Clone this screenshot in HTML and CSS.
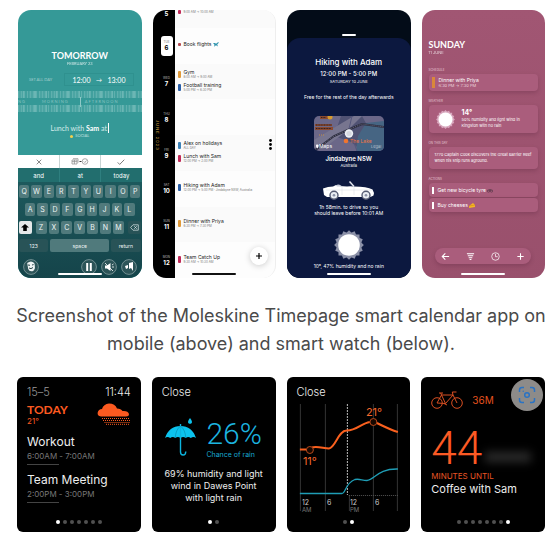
FILE: index.html
```html
<!DOCTYPE html>
<html lang="en">
<head>
<meta charset="utf-8">
<title>Moleskine Timepage</title>
<link rel="stylesheet" href="styles.css">
</head>
<body>
<figure class="figure">
<div class="cards phones">

<section class="phone compose">
  <h2 class="display center">TOMORROW</h2>
  <p class="tiny center soft">FEBRUARY 23</p>
  <div class="when">
    <button class="all-day">SET ALL DAY</button>
    <div class="times"><span>12:00</span><span class="arrow">→</span><span>13:00</span></div>
  </div>
  <div class="timeline">
    <div class="ticks"></div>
    <div class="periods"><span>NG</span><span>MORNING</span><span>AFTERNOON</span></div>
    <div class="ticks"></div>
  </div>
  <p class="entry">Lunch with <b>Sam</b> at<span class="caret"></span></p>
  <p class="tag"><i class="dot-yellow"></i>SOCIAL</p>
  <div class="keyboard">
    <div class="thirds actions">
      <button aria-label="Cancel"><svg width="6" height="6" viewBox="0 0 6 6"><path d="M.7.7l4.6 4.6M5.3.7L.7 5.3" stroke="#555" stroke-width=".7"/></svg></button>
      <button aria-label="Convert to task"><svg width="18" height="7" viewBox="0 0 18 7" fill="none" stroke="#888" stroke-width=".7"><path d="M1 2h5v4H1zM2 .7h5v4M1 3.6h5M3.4 2v4"/><path d="M8.5 3.5h2" stroke="#333" stroke-width="1"/><circle cx="14" cy="3.5" r="2.8"/><path d="M12.8 3.5l1 1 1.7-2"/></svg></button>
      <button aria-label="Done"><svg width="8" height="6" viewBox="0 0 8 6"><path d="M.7 3.4l2 2L7.3.7" fill="none" stroke="#444" stroke-width=".7"/></svg></button>
    </div>
    <div class="thirds hints"><button>and</button><button>at</button><button>today</button></div>
    <div class="keys">
      <div class="key-row"><button>Q</button><button>W</button><button>E</button><button>R</button><button>T</button><button>Y</button><button>U</button><button>I</button><button>O</button><button>P</button></div>
      <div class="key-row inset"><button>A</button><button>S</button><button>D</button><button>F</button><button>G</button><button>H</button><button>J</button><button>K</button><button>L</button></div>
      <div class="key-row letters">
        <button class="shift" aria-label="Shift"><svg width="8" height="7" viewBox="0 0 8 7"><path d="M4 0l4 3.6H5.8V7H2.2V3.6H0z" fill="#000"/></svg></button>
        <div class="key-row"><button>Z</button><button>X</button><button>C</button><button>V</button><button>B</button><button>N</button><button>M</button></div>
        <button class="dark" aria-label="Delete"><svg width="9" height="7" viewBox="0 0 9 7" fill="none" stroke="#dfeaea" stroke-width=".7"><path d="M3 .8h5.3v5.4H3L.6 3.5zM4.2 2.2l2.6 2.6M6.8 2.2L4.2 4.8"/></svg></button>
      </div>
      <div class="key-row bottom"><button class="dark">123</button><button class="space">space</button><button class="dark">return</button></div>
    </div>
    <div class="stickers">
      <button class="round first" aria-label="Sticker"><svg viewBox="0 0 16 16"><circle cx="8" cy="8" r="7.4" fill="#2c5458" stroke="#93aaac" stroke-width=".7"/><path d="M4.200 4q4-3 7 0q2 5-1 8q-4 1-5-2z" fill="#eef3f3"/><path d="M5 6l2 .3M9 6l1.600-.4M6 9q2 1.500 4-.5" stroke="#29464a" fill="none"/></svg></button>
      <button class="round" aria-label="Pause"><svg viewBox="0 0 16 16"><circle cx="8" cy="8" r="7.400" fill="#2c5458" stroke="#93aaac" stroke-width=".7"/><path d="M5.200 4h2v8h-2zM8.800 4h2v8h-2z" fill="#fff"/></svg></button>
      <button class="round" aria-label="Mute"><svg viewBox="0 0 16 16"><circle cx="8" cy="8" r="7.400" fill="#2c5458" stroke="#93aaac" stroke-width=".7"/><path d="M4 6.500h2L9.500 4v8L6 9.500H4z" fill="#fff"/><path d="M4 4l8 8M11 6l1.500-1M11 8h2" stroke="#fff" stroke-width=".8"/></svg></button>
      <button class="round" aria-label="Expand"><svg viewBox="0 0 16 16"><circle cx="8" cy="8" r="7.400" fill="#2c5458" stroke="#93aaac" stroke-width=".7"/><path d="M8 4l4-1v9l-2-3-2 1zM4 7l3-1v3L5 10z" fill="#fff"/></svg></button>
    </div>
  </div>
  <span class="home light"></span>
</section>

<section class="phone agenda">
  <span class="month">JUNE 2023</span>
  <div class="day short"><div class="date"><b>5</b></div><div class="events"><div class="event"><i class="bar crimson"></i><p><small>9:00 AM → 10:00 AM</small></p></div></div></div>
  <div class="day"><div class="date"><span class="pill"><small>TUE</small><b>6</b></span></div><div class="events"><div class="event"><i class="bar square"></i><p>Book flights <svg width="6" height="5" viewBox="0 0 6 5"><path d="M0 1h2l1 .8L5 .3l1 .2-1.800 2L5 4.500 3 3.200 1 4.800l.5-2z" fill="#2d93ad"/></svg></p></div></div></div>
  <div class="day"><div class="date"><small>WED</small><b>7</b></div><div class="events"><div class="event"><i class="bar orange"></i><p>Gym<small>8:00 AM → 9:00 AM</small></p></div><div class="event"><i class="bar blue"></i><p>Football training<small>5:00 PM → 6:30 PM</small></p></div></div></div>
  <div class="day"><div class="date"><small>THU</small><b>8</b></div><div class="events"></div></div>
  <div class="day"><div class="date"><small>FRI</small><b>9</b></div><div class="events"><div class="event"><i class="bar sky"></i><p>Alex on holidays<small>ALL DAY</small></p></div><div class="event"><i class="bar crimson"></i><p>Lunch with Sam<small>12:00 PM → 2:00 PM</small></p></div></div></div>
  <div class="day"><div class="date"><small>SAT</small><b>10</b></div><div class="events"><div class="event"><i class="bar blue"></i><p>Hiking with Adam<small>12:00 PM → 5:00 PM · Jindabyne NSW, Australia</small></p></div></div></div>
  <div class="day"><div class="date"><small>SUN</small><b>11</b></div><div class="events"><div class="event"><i class="bar orange"></i><p>Dinner with Priya<small>6:30 PM → 7:30 PM</small></p></div></div></div>
  <div class="day"><div class="date"><small>MON</small><b>12</b></div><div class="events"><div class="event"><i class="bar crimson"></i><p>Team Catch Up<small>9:30 AM → 10:30 AM</small></p></div></div></div>
  <button class="more" aria-label="More"><svg width="3" height="11" viewBox="0 0 3 11"><circle cx="1.500" cy="1.500" r="1.400"/><circle cx="1.500" cy="5.500" r="1.400"/><circle cx="1.500" cy="9.500" r="1.400"/></svg></button>
  <button class="fab" aria-label="Add event"><svg width="6" height="6" viewBox="0 0 6 6"><path d="M3 0v6M0 3h6" stroke="#000" stroke-width="1.200"/></svg></button>
  <span class="home"></span>
</section>

<section class="phone detail">
  <span class="grip"></span>
  <div class="sheet">
    <h2>Hiking with Adam</h2>
    <p class="hours">12:00 PM - 5:00 PM</p>
    <p class="tiny">SATURDAY 10 JUNE</p>
    <p class="note free">Free for the rest of the day afterwards</p>
    <svg class="map" viewBox="0 0 70 35" role="img" aria-label="Map">
      <path fill="#6b6788" d="M0 0h70v35H0z"/><path fill="#505273" d="M27 0h21l5 9 9-3 8 8v21H48L37 26 20 20z"/><path fill="#466583" d="M44 20l8-13 18-2v30H42z"/><path fill="#77758f" d="M28 7l12-7h8L34 14 9 33H0V24z"/>
      <path d="M0 35l20-15 16-7 12-5 22 3" stroke="#292a3d" stroke-width="2" fill="none"/><path d="M0 35l20-15 16-7 12-5 22 3" stroke="#9795a6" stroke-width=".6" stroke-dasharray="1 1" fill="none"/><path d="M38 0l-3 13 8 22" stroke="#55577c" fill="none"/>
      <path fill="#8a4930" d="M1 8h17v2H1zM1 11h18v3H1zM6 0h8v3H6z"/><path d="M2 9h16M2 12.500h15M7 1.500h5" stroke="#2d2023" stroke-dasharray="1 .6"/><circle cx="16" cy="1" r="2.500" fill="#d59a2c"/><path d="M5 19h5" stroke="#c48e46" stroke-dasharray="1 1"/>
      <circle cx="32" cy="25" r="2.300" fill="#f0752f"/><text x="36" y="27" font-size="5" fill="#ef7544">The Lake</text>
      <circle cx="35" cy="17.500" r="4.200" fill="#eef0f5"/><circle cx="35" cy="17.500" r="2.600" fill="#d7d9e1"/>
      <text x="5" y="32" font-size="5" fill="#fff">Maps</text><path fill="#fff" d="M2 29.500q0-1.500 1.500-1 1.500 0 1 2t-1.500 1.500T2 29.500z"/><text x="57" y="32" font-size="4" fill="#b9c1d0">Legal</text>
    </svg>
    <h3>Jindabyne NSW</h3>
    <p class="tiny aus">Australia</p>
    <svg class="car" viewBox="0 0 52 19" role="img" aria-label="Car"><path fill="#fff" d="M0 7.500Q5 5.500 10 5.500l3-1.500 3 1 8 .5 3.500-.3 3.500.3q13 .2 18.500 3L51 12l-.5 2.500-3 1.500H4L1 14z"/><path fill="#c9cedb" d="M13 4.500q2-2 5 0l1 1h-5z"/><path d="M26.500.5l4.500 5" stroke="#e9ecf3" stroke-width="1.500"/><path d="M29 4.500l-3-3.500" stroke="#7e86a0" stroke-width=".5"/><path d="M3 9h46M31 6v8M19 6v8" stroke="#d4d8e2" stroke-width=".5"/><g fill="#e9edf2" stroke="#555b72" stroke-width="1.400"><circle cx="11" cy="14.300" r="4"/><circle cx="43" cy="14.300" r="4"/></g><g fill="#8a91a5"><circle cx="11" cy="14.300" r="1.300"/><circle cx="43" cy="14.300" r="1.300"/></g></svg>
    <p class="note">1h 58min. to drive so you<br>should leave before 10:01 AM</p>
    <svg class="sun" viewBox="0 0 30 30" role="img" aria-label="Sunny"><g fill="#8b90a7"><path d="M4.500 4.500h21v21h-21z"/><path d="M4.500 4.500h21v21h-21z" transform="rotate(22.500 15 15)"/><path d="M4.500 4.500h21v21h-21z" transform="rotate(45 15 15)"/><path d="M4.500 4.500h21v21h-21z" transform="rotate(67.500 15 15)"/></g><circle cx="15" cy="15" r="10.800" fill="#fff"/></svg>
    <p class="note">10°, 47% humidity and no rain</p>
  </div>
  <span class="home light"></span>
</section>

<section class="phone today">
  <h2 class="display">SUNDAY</h2>
  <p class="tiny soft">11 JUNE</p>
  <h3>SCHEDULE</h3>
  <div class="tile"><i class="mark orange"></i><p>Dinner with Priya<small>6:30 PM → 7:30 PM</small></p></div>
  <h3>WEATHER</h3>
  <div class="tile weather"><svg class="mini-sun" viewBox="0 0 30 30" role="img" aria-label="Sunny"><g fill="#d9a9bf"><path d="M4.500 4.500h21v21h-21z"/><path d="M4.500 4.500h21v21h-21z" transform="rotate(22.500 15 15)"/><path d="M4.500 4.500h21v21h-21z" transform="rotate(45 15 15)"/><path d="M4.500 4.500h21v21h-21z" transform="rotate(67.500 15 15)"/></g><circle cx="15" cy="15" r="11" fill="#fff"/></svg><p><b>14°</b><br>50% humidity and light wind in<br>Kingston with no rain</p></div>
  <h3>ON THIS DAY</h3>
  <div class="tile history"><p>1770 Captain Cook discovers the Great Barrier Reef when his ship runs aground.</p></div>
  <h3>ACTIONS</h3>
  <div class="tile action"><i class="mark"></i><p>Get new bicycle tyre <svg width="6" height="5" viewBox="0 0 6 5" fill="none" stroke="#5c3b4c" stroke-width=".7"><circle cx="1.500" cy="3" r="1.200"/><circle cx="4.500" cy="3" r="1.200"/><path d="M1.500 3L3 1l1.500 2"/></svg></p></div>
  <div class="tile action"><i class="mark"></i><p>Buy cheeses <svg width="6" height="5" viewBox="0 0 6 5"><path d="M0 3L4 0l2 2v2L0 5z" fill="#f5b822"/><path d="M0 3l6-1" stroke="#c87d18" stroke-width=".5"/></svg></p></div>
  <nav class="dock">
    <button aria-label="Back"><svg viewBox="0 0 10 10"><path d="M9 5H1.500M4.800 1.600L1.400 5l3.400 3.400"/></svg></button>
    <button aria-label="Filter"><svg viewBox="0 0 10 10"><path d="M1 2h8M2 4.200h6M3 6.400h4M4 8.400h2"/></svg></button>
    <button aria-label="History"><svg viewBox="0 0 10 10"><circle cx="5" cy="5" r="4.200" stroke-width=".8"/><path d="M5 2v3.200h2.400" stroke-width=".8"/></svg></button>
    <button aria-label="Add"><svg viewBox="0 0 10 10"><path d="M5 1.500v7M1.500 5h7"/></svg></button>
  </nav>
  <span class="home light"></span>
</section>
</div>

<figcaption>Screenshot of the Moleskine Timepage smart calendar app on mobile (above) and smart watch (below).</figcaption>

<div class="cards watches">
<section class="watch">
  <div class="split clock"><span class="grey">15–5</span><span>11:44</span></div>
  <div class="split summary"><div><h2>TODAY</h2><p>21°</p></div>
  <svg width="34" height="22" viewBox="0 0 34 22" role="img" aria-label="Rain"><path fill="#fc5a20" d="M4 13.500Q0 13 .7 9.500 1.500 6 5 6 6.500 1 12 .5q6 0 8 5 4 0 5.500 2.500Q31 7.500 32 11q0 2.500-3 2.500z"/><path d="M5 15.500h27M6 17.500h27M7.500 19.500h26M9 21.300h23" stroke="#fc5a20" stroke-width="1" stroke-dasharray="1 1"/></svg></div>
  <div class="appt"><h3>Workout</h3><p>6:00AM - 7:00AM</p></div>
  <div class="appt"><h3>Team Meeting</h3><p>2:00PM - 3:00PM</p></div>
  <div class="dots"><i class="on"></i><i></i><i></i><i></i><i></i><i></i><i></i></div>
</section>

<section class="watch">
  <button class="close">Close</button>
  <div class="rain">
    <svg width="31" height="38" viewBox="0 0 31 38" role="img" aria-label="Umbrella"><path fill="#0cc3ee" d="M0 20Q4 8 15.500 8T31 20q-2.500-2-5.200 0-2.500-2-5.100 0-2.600-2-5.200 0-2.600-2-5.200 0-2.600-2-5.100 0Q2.500 18 0 20zM25 0q3 4 1.500 5.200-1.500 1-3 0Q22 4 25 0z"/><path d="M15.500 6v28q0 3 2.600 3t2.700-3.500" stroke="#0cb5df" stroke-width="1.400" fill="none"/><path d="M15.500 8q-5 4-5.200 12M15.500 8q5 4 5.200 12" stroke="#067c9b" stroke-width=".5" fill="none"/></svg>
    <div><strong>26%</strong><span>Chance of rain</span></div>
  </div>
  <p class="forecast">69% humidity and light<br>wind in Dawes Point<br>with light rain</p>
  <div class="dots"><i class="on"></i><i></i></div>
</section>

<section class="watch">
  <button class="close">Close</button>
  <svg class="chart" viewBox="0 0 100 110" role="img" aria-label="Temperature and rain by hour">
    <path d="M1.500 1v107M26.500 1v107M74.500 1v107M98.500 1v107" stroke="#343434"/>
    <path d="M50.500 92v16" stroke="#343434"/>
    <path d="M48.500 1v91" stroke="#bbb" stroke-dasharray="2 1"/>
    <path d="M50 92.500h49" stroke="#555" stroke-dasharray="1 1"/>
    <path d="M1 90.500h42c4 0 3-10 13-14 5-1 7 1 12 1 8-1 11-12 31-11.500" fill="none" stroke="#1f9db5" stroke-width="1.300"/>
    <path d="M1 46.500h6.500M13 44.500c5-2 12 1 17 1 7-1 9-18 18-18 10 0 14-7 23-8.500M78 20c6 3 14 7 21 9" fill="none" stroke="#f9601e" stroke-width="2"/>
    <g fill="#160700" stroke="#b9491b"><circle cx="11" cy="47" r="3.500"/><circle cx="74.500" cy="19" r="3.500"/></g>
    <g fill="#f4672c" font-size="11"><text x="4" y="62">11°</text><text x="67" y="13">21°</text></g>
    <g fill="#ccc" font-size="7"><text x="3" y="102">12</text><text x="28" y="102">6</text><text x="51" y="102">12</text><text x="76" y="102">6</text></g>
    <g fill="#777" font-size="6"><text x="3" y="109">AM</text><text x="51" y="109">PM</text></g>
  </svg>
  <div class="dots"><i></i><i class="on"></i></div>
</section>

<section class="watch until">
  <span class="smudge"></span>
  <div class="ride"><svg width="32" height="18" viewBox="0 0 32 18" fill="none" stroke="#d94f22" stroke-width="1" role="img" aria-label="Bicycle"><circle cx="6" cy="12" r="5.300"/><circle cx="26" cy="12" r="5.300"/><path d="M6 12L10.500 4H22l-7.500 8.500L10.500 4M6 12l8.500.5M22 4l4 8M22 4l-.7-3h4.200M10.500 4L9.700 2M8 2h4M13 12.500l3 1.500"/></svg><span>36M</span></div>
  <strong class="count">44</strong>
  <p class="label">MINUTES UNTIL</p>
  <h3>Coffee with Sam</h3>
  <div class="dots"><i></i><i></i><i></i><i></i><i></i><i></i><i></i><i class="on"></i></div>
  <button class="lens" aria-label="Search image"><svg width="18" height="18" viewBox="0 0 18 18" fill="none" stroke="#2a73c4" stroke-width="1.500"><path d="M1.500 6V4q0-2.500 2.500-2.500h2M12 1.500h2q2.500 0 2.500 2.500v2M16.500 12v2q0 2.500-2.500 2.500h-2M6 16.500H4Q1.500 16.500 1.500 14v-2"/><circle cx="9" cy="9" r="2.300"/><circle cx="5.200" cy="5.200" r=".7" fill="#2a73c4" stroke="none"/></svg></button>
</section>
</div>
</figure>
</body>
</html>
```
FILE: styles.css
```css
* { box-sizing: border-box; }
body { margin: 0; background: #fff; font-family: Inter, Roboto, sans-serif; }
h2, h3, p, figure { margin: 0; font-weight: 400; }
button { border: 0; padding: 0; margin: 0; background: none; font: inherit; color: inherit; display: flex; align-items: center; justify-content: center; }
svg { display: block; }
small { display: block; }

.figure { padding: 10px 0 11px; }
.cards { display: grid; grid-template-columns: repeat(4, minmax(0, 1fr)); gap: 11px; padding: 0 13px 0 17px; }
.phones { padding-left: 18px; }
figcaption { margin: 24px 0 19px; padding: 0 8px 0 12px; font-size: 18px; line-height: 28px; color: #4a4a4a; text-align: center; }

/* Phones */
.phone { position: relative; display: flex; flex-direction: column; min-height: 268px; overflow: hidden; border-radius: 13px; color: #fff; }
.display { font: 700 9px/10px Lato, sans-serif; }
.tiny { font-size: 4px; line-height: 5px; }
.soft { opacity: .75; }
.center { text-align: center; }
.home { position: absolute; bottom: 3px; left: 50%; width: 44px; height: 2px; margin-left: -22px; border-radius: 1px; background: #111; }
.home.light { background: #fff; }

.compose { padding-top: 41px; background: #359997; font-family: Lato, sans-serif; }
.when { display: flex; align-items: center; justify-content: space-between; height: 13px; margin-top: 7px; padding: 0 8px 0 11px; }
.all-day { font-size: 4px; color: #a5d0ce; }
.times { display: flex; align-items: center; justify-content: space-between; width: 70px; height: 13px; padding: 0 7px 0 8px; border: 1px solid #2f918f; font-size: 7px; }
.arrow { font-size: 6px; }
.timeline { position: relative; margin-top: 5px; }
.ticks { height: 7px; background: repeating-linear-gradient(90deg, #5fb0ae 0 1px, transparent 1px 3px), repeating-linear-gradient(90deg, #4ca5a3 0 5px, #6bb6b4 5px 7px, #42a09e 7px 11px); }
.periods { display: flex; justify-content: space-between; height: 7px; padding-right: 23px; font-size: 4px; line-height: 7px; letter-spacing: 1px; color: #86c2c0; }
.timeline::after { content: ""; position: absolute; left: 50%; top: 6px; width: 1px; height: 10px; background: #8fc9c7; }
.entry { display: flex; justify-content: center; margin-top: 11px; font-size: 7px; line-height: 10px; white-space: pre; color: #d5ecea; }
.entry b { color: #fff; }
.caret { width: 1px; height: 10px; margin-left: 1px; background: #fff; }
.tag { display: flex; align-items: center; justify-content: center; gap: 2px; font-size: 4px; line-height: 6px; color: #c5e2e0; }
.dot-yellow { width: 3px; height: 3px; border-radius: 50%; background: #f3cf4b; }

.keyboard { margin-top: auto; background: linear-gradient(#1f5f62, #15444a); font-family: Inter, sans-serif; }
.thirds { display: grid; grid-template-columns: repeat(3, 1fr); }
.thirds button + button { border-left: 1px solid #c9d5d5; }
.actions { height: 13px; background: #fff; }
.hints { height: 14px; background: #226e6e; font-size: 6px; }
.hints button + button { border-left-color: #2e7f7f; }
.keys { display: grid; gap: 5px; padding: 3px 1px 7px; }
.key-row { display: flex; gap: 2px; }
.key-row button { flex: 1; min-width: 0; height: 13px; border-radius: 2px; background: #507a7c; font-size: 7px; color: #eef5f5; }
.key-row.inset { padding: 0 6px; }
.key-row.letters { gap: 4px; }
.key-row.letters .key-row { flex: 7; }
.key-row .shift { background: #e4e8e9; }
.key-row .dark { background: #285357; }
.key-row.bottom button { flex: 1; font-size: 5px; }
.key-row.bottom .space { flex: 2; }
.stickers { display: flex; gap: 4px; padding: 0 5px 3px; }
.round { width: 16px; height: 16px; }
.round svg { width: 16px; height: 16px; }
.round.first { margin-right: auto; }

.agenda { background: #fdfdfd; color: #222; border-right: 1px solid #eee; }
.day { flex: 1; display: grid; grid-template-columns: 22px 1fr; min-height: 35px; }
.day.short { flex: none; min-height: 18px; }
.day:nth-child(even) .events { background: #fafafa; }
.date { display: flex; flex-direction: column; align-items: center; justify-content: center; padding-left: 6px; background: #000; color: #fff; font-size: 6px; line-height: 7px; }
.short .date, .short .events { justify-content: flex-start; }
.date small { font-size: 3px; line-height: 4px; color: #bbb; }
.pill { display: flex; flex-direction: column; align-items: center; justify-content: center; width: 12px; height: 20px; border-radius: 3px; background: #fff; color: #000; }
.pill small { color: #777; }
.events { display: flex; flex-direction: column; justify-content: center; gap: 4px; padding: 0 0 2px 3px; }
.event { display: flex; align-items: center; gap: 3px; font-size: 5px; line-height: 5px; }
.event small { font-size: 3px; line-height: 4px; color: #777; }
.event p svg { display: inline; vertical-align: -1px; }
.bar { width: 3px; height: 7px; border-radius: 1px; }
.bar.square { height: 3px; background: #b34a50; }
.short .bar { height: 4px; }
.crimson { background: #c02a59; }
.orange { background: #e09a3a; }
.blue { background: #2a5fa8; }
.sky { background: #3d83b8; }
.month { position: absolute; left: 2px; top: 110px; writing-mode: vertical-rl; font-size: 4px; line-height: 5px; letter-spacing: 1px; color: #cfa247; }
.more { position: absolute; right: 3px; top: 129px; }
.fab { position: absolute; right: 7px; bottom: 13px; width: 18px; height: 18px; border-radius: 50%; background: #fff; box-shadow: 0 1px 6px #0003; }

.detail { background: #030c18; text-align: center; }
.grip { width: 14px; height: 2px; margin: 24px auto 2px; border-radius: 1px; background: #fff; }
.sheet { flex: 1; display: flex; flex-direction: column; align-items: center; padding-top: 18px; border-radius: 13px 13px 0 0; background: #0c183f; }
.detail h2 { font-size: 8px; line-height: 12px; font-weight: 500; }
.hours { font-size: 6px; line-height: 10px; font-weight: 500; margin-top: 1px; }
.note { font-size: 5px; line-height: 6px; }
.free { margin: 10px 0 16px; }
.map { width: 70px; height: 35px; border-radius: 5px; }
.detail h3 { margin-top: 4px; font-size: 6px; line-height: 8px; font-weight: 600; }
.aus { margin-bottom: 13px; }
.car { width: 52px; height: 19px; margin-bottom: 4px; }
.sun { width: 30px; height: 30px; margin: 14px 0 3px; }

.today { padding: 30px 7px 14px; background: linear-gradient(#a15673, #99506c); }
.today h3 { margin: 8px 0 2px; font-size: 3px; line-height: 4px; color: #e4c6d3; }
.today .tiny { margin: 0 0 5px; }
.tile { display: flex; align-items: center; gap: 4px; min-height: 17px; padding: 0 4px 0 3px; border-radius: 4px; background: #aa5d7c; box-shadow: 0 2px 4px #4d1d3344; font-size: 5px; line-height: 6px; }
.tile small { font-size: 4px; line-height: 5px; color: #ecd5df; }
.mark { width: 2px; height: 7px; background: #fff; }
.mark.orange { width: 3px; height: 11px; background: #d9883b; }
.weather { min-height: 28px; gap: 7px; padding-left: 7px; font-size: 4px; line-height: 6px; }
.weather b { font-size: 7px; }
.mini-sun { width: 19px; height: 19px; }
.history { min-height: 22px; padding: 0 6px; font-size: 4px; }
.action { min-height: 14px; margin-bottom: 1px; }
.action svg { display: inline; vertical-align: -1px; }
.dock { display: flex; align-items: center; justify-content: space-between; height: 16px; margin: auto 7px 0 6px; padding: 0 6px; border-radius: 8px; background: #aa5d7c; box-shadow: 0 2px 4px #4d1d3344; }
.dock svg { width: 9px; height: 9px; fill: none; stroke: #fff; stroke-width: 1.2; }

/* Watches */
.watch { position: relative; display: flex; flex-direction: column; min-height: 155px; padding: 9px 10px 8px; overflow: hidden; border-radius: 6px; background: #000; color: #eee; }
.split { display: flex; justify-content: space-between; }
.clock { font-size: 11px; line-height: 13px; font-weight: 300; }
.grey { color: #999; }
.summary { margin: 4px 0 0; color: #fc5a20; }
.summary h2 { font: 700 12px/13px Lato, sans-serif; }
.summary p { font-size: 8px; line-height: 10px; }
.appt { margin-top: 8px; }
.appt h3 { font-size: 12px; line-height: 16px; }
.appt p { font-size: 8px; line-height: 12px; color: #777; }
.appt::after { content: ""; display: block; width: 32px; height: 1px; margin-top: 2px; background: #444; }
.appt + .appt { margin-top: 7px; }
.dots { display: flex; justify-content: center; gap: 3px; margin-top: auto; }
.dots i { width: 4px; height: 4px; border-radius: 50%; background: #505050; }
.dots .on { background: #fff; }
.close { align-self: flex-start; font-size: 11px; line-height: 13px; font-weight: 300; }
.rain { display: flex; justify-content: center; gap: 10px; margin-top: 19px; color: #18a9d2; }
.rain div { display: flex; flex-direction: column; }
.rain strong { font: 300 30px/32px Roboto, sans-serif; color: #1cb5e0; }
.rain span { font-size: 7px; line-height: 10px; }
.forecast { margin: 8px -4px 0; font-size: 9px; line-height: 12px; text-align: center; }
.chart { width: 100%; height: 110px; margin-top: 4px; font-family: Inter, sans-serif; }
.until > * { position: relative; }
.watch .smudge { position: absolute; left: 64px; top: 75px; width: 46px; height: 10px; background: #2c2c2c; filter: blur(5px); }
.ride { display: flex; align-items: center; gap: 9px; height: 24px; font-size: 10px; color: #e5531f; }
.until { padding-top: 11px; }
.count { margin-top: 13px; font: 300 46px/46px Roboto, sans-serif; color: #fc5a24; }
.label { font-size: 8px; line-height: 10px; color: #e85524; }
.until h3 { font-size: 11px; line-height: 17px; }
.watch .lens { position: absolute; right: 2px; top: 2px; width: 32px; height: 32px; border-radius: 50%; background: #8d8b89; }
```
